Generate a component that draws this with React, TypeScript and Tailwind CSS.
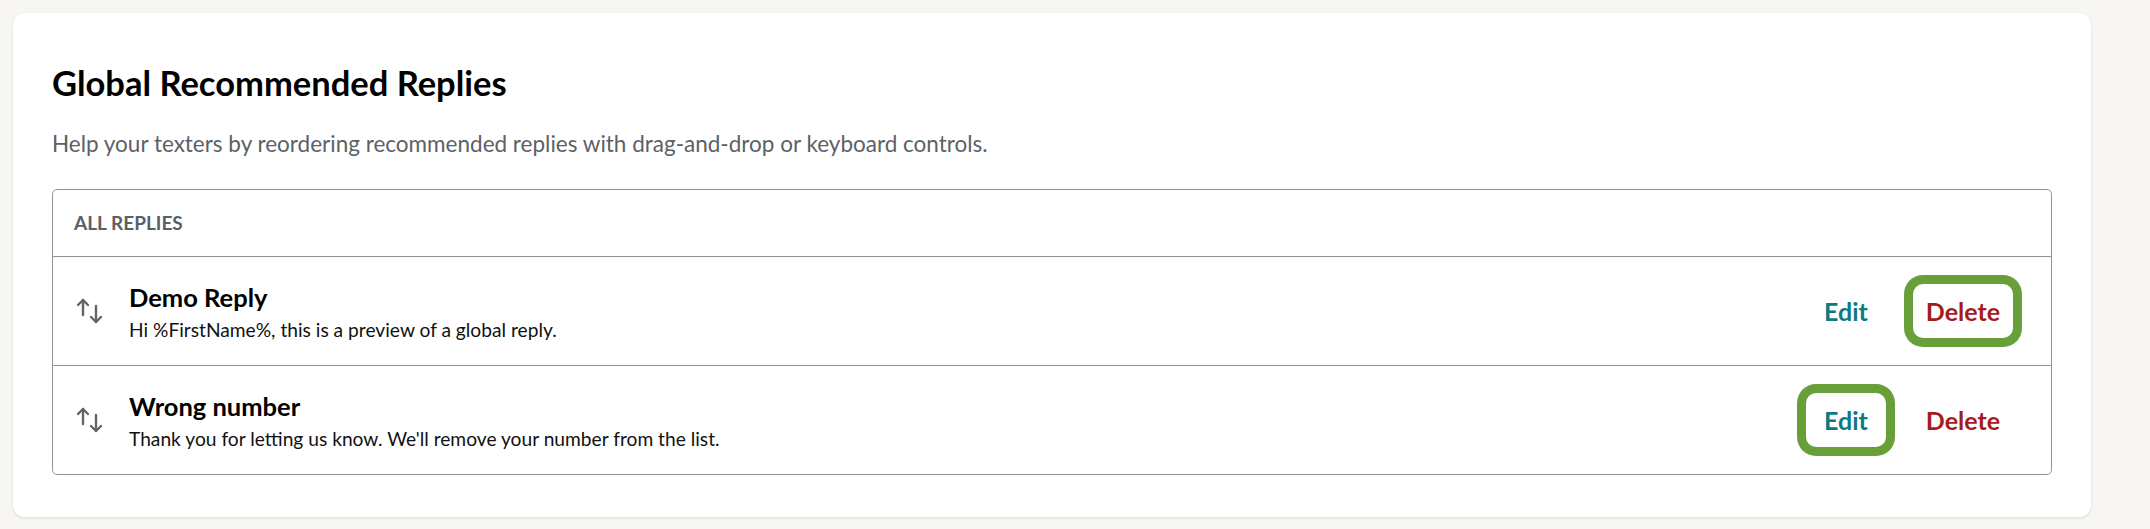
import React from 'react';

type Reply = {
  id: string;
  title: string;
  body: string;
  focused?: 'edit' | 'delete';
};

const replies: Reply[] = [{
  id: 'demo',
  title: 'Demo Reply',
  body: 'Hi %FirstName%, this is a preview of a global reply.',
  focused: 'delete'
}, {
  id: 'wrong',
  title: 'Wrong number',
  body: "Thank you for letting us know. We'll remove your number from the list.",
  focused: 'edit'
}];

// reorder handle: up arrow on the left, down arrow offset on the right
const SwapIcon = () => <svg width="28" height="28" viewBox="0 0 28 28" fill="none" stroke="#5f656b" strokeWidth="2.4" strokeLinecap="round" strokeLinejoin="round" className="shrink-0">
    <path d="M7 3v15" />
    <path d="M2 8l5-5 5 5" />
    <path d="M20 9v16" />
    <path d="M15 20l5 5 5-5" />
  </svg>;

const ActionButton: React.FC<{
  label: string;
  tone: 'edit' | 'delete';
  focused?: boolean;
}> = ({
  label,
  tone,
  focused
}) => {
  const color = tone === 'edit' ? 'text-[#0b7a82] px-[18px]' : 'text-[#a51c1c] px-[13px]';
  return <button className={`py-[12px] rounded-[10px] text-[25px] leading-[1.2] font-bold ${color} ${focused ? 'ring-[9px] ring-[#689f38]' : ''}`}>
      {label}
    </button>;
};

const ReplyRow: React.FC<{
  reply: Reply;
}> = ({
  reply
}) => {
  return <div className="h-[109px] flex items-center pl-[23px] pr-[38px] border-t border-[#929292]">
      <SwapIcon />
      <div className="ml-[25px] flex-1 min-w-0">
        <div className="text-[25.5px] leading-[1.2] font-bold text-black">{reply.title}</div>
        <div className="mt-[6px] text-[19.2px] leading-[1.2] text-[#111]">{reply.body}</div>
      </div>
      <div className="flex items-center gap-[27px]">
        <ActionButton label="Edit" tone="edit" focused={reply.focused === 'edit'} />
        <ActionButton label="Delete" tone="delete" focused={reply.focused === 'delete'} />
      </div>
    </div>;
};

export default function App() {
  return <div className="min-h-screen bg-[#f7f6f2] pl-[13px] pr-[59px] pt-[13px] pb-[12px]" style={{
    fontFamily: 'Lato, "Noto Sans", sans-serif'
  }}>
      <section className="bg-white rounded-xl shadow-[0_1px_3px_rgba(0,0,0,0.12)] px-[39px] pt-[49px] pb-[42px]">
        <h2 className="text-[34.5px] leading-[1.2] font-bold text-black">Global Recommended Replies</h2>
        <p className="mt-[27px] text-[22.5px] leading-[1.2] text-[#5c6166]">
          Help your texters by reordering recommended replies with drag-and-drop or keyboard controls.
        </p>

        {/* replies table */}
        <div className="mt-[32px] border border-[#929292] rounded-[5px]">
          <div className="h-[66px] flex items-center px-[21px] text-[19px] leading-[1.2] font-bold text-[#5a6066]">
            ALL REPLIES
          </div>
          {replies.map(r => <ReplyRow key={r.id} reply={r} />)}
        </div>
      </section>
    </div>;
}
